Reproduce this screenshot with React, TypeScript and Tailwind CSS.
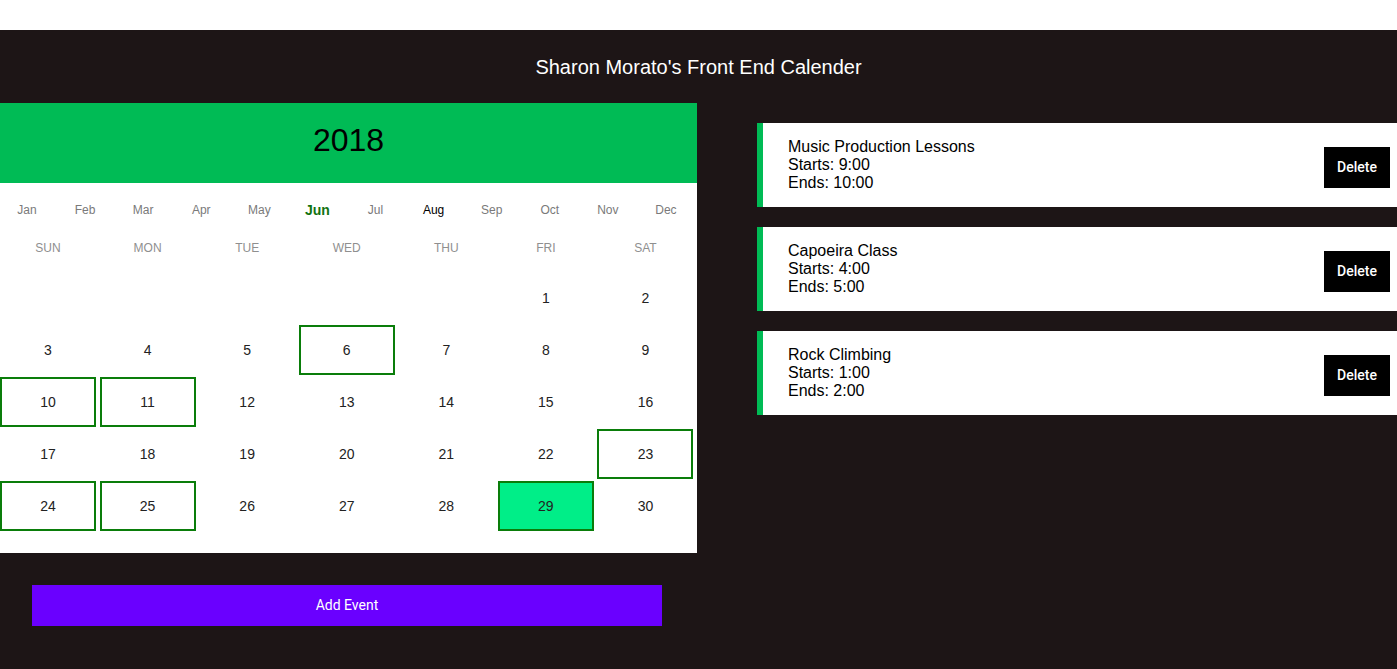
import React from 'react';

const months = ['Jan', 'Feb', 'Mar', 'Apr', 'May', 'Jun', 'Jul', 'Aug', 'Sep', 'Oct', 'Nov', 'Dec'];
const weekdays = ['SUN', 'MON', 'TUE', 'WED', 'THU', 'FRI', 'SAT'];
const eventDays = [6, 10, 11, 23, 24, 25];
const today = 29;

const events = [
  { title: 'Music Production Lessons', starts: '9:00', ends: '10:00' },
  { title: 'Capoeira Class', starts: '4:00', ends: '5:00' },
  { title: 'Rock Climbing', starts: '1:00', ends: '2:00' },
];

const Calendar: React.FC = () => {
  // June 2018 starts on a Friday
  const cells: (number | null)[] = [...Array(5).fill(null), ...Array.from({ length: 30 }, (_, i) => i + 1)];

  return (
    <div className="bg-white">
      <div className="h-[80px] bg-[#00bb55] flex items-center justify-center pb-[6px]">
        <span className="text-[32px] text-black">2018</span>
      </div>

      <div className="grid grid-cols-12 h-[54px] items-center -ml-[2px] w-[697px]">
        {months.map((m) => (
          <div
            key={m}
            className={
              m === 'Jun'
                ? 'text-center text-[14px] font-bold text-[#127312]'
                : m === 'Aug'
                ? 'text-center text-[12px] text-black'
                : 'text-center text-[12px] text-[#7a7a7a]'
            }
          >
            {m}
          </div>
        ))}
      </div>

      <div className="grid grid-cols-7 h-[22px] items-center">
        {weekdays.map((d) => (
          <div key={d} className="w-[96px] text-center text-[12px] text-[#8f8f8f]">
            {d}
          </div>
        ))}
      </div>

      <div className="grid grid-cols-7 gap-y-[2px] mt-[14px] pb-[22px]">
        {cells.map((day, i) => (
          <div
            key={i}
            className={`w-[96px] h-[50px] flex items-center justify-center text-[14px] text-[#222] border-2 ${
              day === today
                ? 'bg-[#00ee88] border-[#0a7d0a]'
                : day && eventDays.includes(day)
                ? 'border-[#0a7d0a]'
                : 'border-transparent'
            }`}
          >
            {day}
          </div>
        ))}
      </div>
    </div>
  );
};

const EventCard: React.FC<{ title: string; starts: string; ends: string }> = ({ title, starts, ends }) => (
  <div className="h-[84px] bg-white border-l-[6px] border-[#00bb55] flex items-center justify-between pl-[25px] pr-[7px]">
    <div className="text-[16px] leading-[18px] text-black">
      <div>{title}</div>
      <div>Starts: {starts}</div>
      <div>Ends: {ends}</div>
    </div>
    <button className="mt-[5px] w-[66px] h-[41px] bg-black text-white text-[14px] font-medium font-['Roboto',sans-serif]">
      Delete
    </button>
  </div>
);

export default function App() {
  return (
    <div className="min-h-[669px] bg-white font-['Liberation_Sans',Arial,sans-serif]">
      <div className="h-[30px] bg-white" />
      <div className="bg-[#1d1516] min-h-[639px]">
        <div className="h-[73px] flex items-center justify-center">
          <h1 className="text-[20px] text-white">Sharon Morato's Front End Calender</h1>
        </div>

        <div className="flex">
          <div className="w-[697px] shrink-0">
            <Calendar />
            <button className="mt-[32px] ml-[32px] w-[630px] h-[41px] bg-[#6a00ff] text-white text-[14px] font-['Roboto',sans-serif]">
              Add Event
            </button>
          </div>

          <div className="flex-1 pl-[60px] pt-[20px] flex flex-col gap-[20px]">
            {events.map((e) => (
              <EventCard key={e.title} {...e} />
            ))}
          </div>
        </div>
      </div>
    </div>
  );
}
